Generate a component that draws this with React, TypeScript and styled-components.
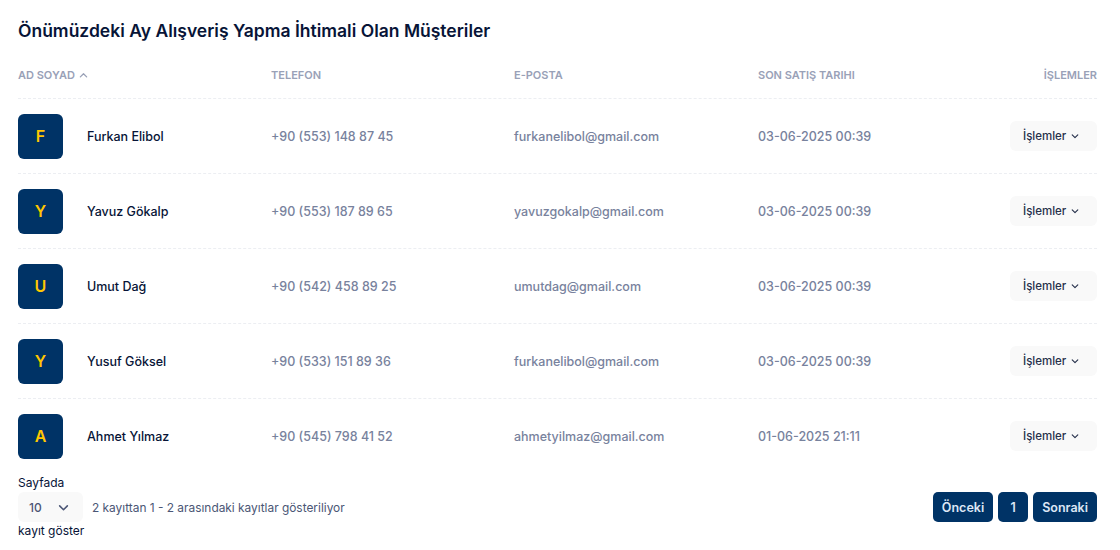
import React from 'react';
import styled, { createGlobalStyle } from 'styled-components';

const GlobalStyle = createGlobalStyle`
  body {
    margin: 0;
    background: #fff;
    font-family: Inter, "Noto Sans", sans-serif;
    color: #071437;
  }
`;

type Customer = {
  name: string;
  phone: string;
  email: string;
  date: string;
};

const customers: Customer[] = [
  { name: 'Furkan Elibol', phone: '+90 (553) 148 87 45', email: 'furkanelibol@gmail.com', date: '03-06-2025 00:39' },
  { name: 'Yavuz Gökalp', phone: '+90 (553) 187 89 65', email: 'yavuzgokalp@gmail.com', date: '03-06-2025 00:39' },
  { name: 'Umut Dağ', phone: '+90 (542) 458 89 25', email: 'umutdag@gmail.com', date: '03-06-2025 00:39' },
  { name: 'Yusuf Göksel', phone: '+90 (533) 151 89 36', email: 'furkanelibol@gmail.com', date: '03-06-2025 00:39' },
  { name: 'Ahmet Yılmaz', phone: '+90 (545) 798 41 52', email: 'ahmetyilmaz@gmail.com', date: '01-06-2025 21:11' },
];

const Chevron = ({ up, size = 8 }: { up?: boolean; size?: number }) => (
  <svg width={size} height={size} viewBox="0 0 10 10" fill="none">
    <path
      d={up ? 'M1.5 6.5 L5 3 L8.5 6.5' : 'M1.5 3.5 L5 7 L8.5 3.5'}
      stroke="currentColor"
      strokeWidth="1.4"
      strokeLinecap="round"
      strokeLinejoin="round"
    />
  </svg>
);

const App = () => {
  return (
    <>
      <GlobalStyle />
      <Card>
        <Title>Önümüzdeki Ay Alışveriş Yapma İhtimali Olan Müşteriler</Title>
        <HeadRow>
          <HeadCell>
            AD SOYAD <Chevron up size={9} />
          </HeadCell>
          <HeadCell>TELEFON</HeadCell>
          <HeadCell>E-POSTA</HeadCell>
          <HeadCell>SON SATIŞ TARIHI</HeadCell>
          <HeadCell $right>İŞLEMLER</HeadCell>
        </HeadRow>
        {customers.map((c, i) => (
          <Row key={i} $last={i === customers.length - 1}>
            <NameCell>
              <Avatar>{c.name.charAt(0)}</Avatar>
              <Name>{c.name}</Name>
            </NameCell>
            <Muted>{c.phone}</Muted>
            <Muted>{c.email}</Muted>
            <Muted>{c.date}</Muted>
            <ActionCell>
              <ActionButton>
                İşlemler <Chevron />
              </ActionButton>
            </ActionCell>
          </Row>
        ))}
        <Footer>
          <PageSize>
            <Label>Sayfada</Label>
            <Select>
              10 <Chevron size={11} />
            </Select>
            <Label>kayıt göster</Label>
          </PageSize>
          <Info>2 kayıttan 1 - 2 arasındaki kayıtlar gösteriliyor</Info>
          <Pager>
            <PageButton>Önceki</PageButton>
            <PageButton $square>1</PageButton>
            <PageButton>Sonraki</PageButton>
          </Pager>
        </Footer>
      </Card>
    </>
  );
};

export default App;

const Card = styled.div`
  padding: 17px 23px 0 18px;
`;

const Title = styled.h1`
  margin: 0 0 23px;
  font-size: 17.5px;
  line-height: 27px;
  font-weight: 600;
  color: #071437;
`;

const columns = '253px 243px 244px 244px 1fr';

const HeadRow = styled.div`
  display: grid;
  grid-template-columns: ${columns};
  padding-bottom: 15px;
  border-bottom: 1px dashed #eceef2;
`;

const HeadCell = styled.div<{ $right?: boolean }>`
  display: flex;
  align-items: center;
  gap: 4px;
  justify-content: ${(p) => (p.$right ? 'flex-end' : 'flex-start')};
  font-size: 11px;
  line-height: 16px;
  font-weight: 600;
  color: #99a1b7;
`;

const Row = styled.div<{ $last?: boolean }>`
  display: grid;
  grid-template-columns: ${columns};
  align-items: center;
  height: 74px;
  border-bottom: ${(p) => (p.$last ? 'none' : '1px dashed #eceef2')};
`;

const NameCell = styled.div`
  display: flex;
  align-items: center;
  gap: 24px;
`;

const Avatar = styled.div`
  width: 45px;
  height: 45px;
  border-radius: 6px;
  background: #003366;
  color: #ffc700;
  display: flex;
  align-items: center;
  justify-content: center;
  font-size: 16px;
  font-weight: 600;
`;

const Name = styled.span`
  font-size: 12.5px;
  font-weight: 500;
  color: #071437;
`;

const Muted = styled.div`
  font-size: 12.5px;
  font-weight: 500;
  color: #78829d;
`;

const ActionCell = styled.div`
  display: flex;
  justify-content: flex-end;
`;

const ActionButton = styled.button`
  display: flex;
  align-items: center;
  gap: 5px;
  height: 30px;
  width: 87px;
  padding: 0 13px;
  border: none;
  border-radius: 6px;
  background: #f9f9f9;
  color: #252f4a;
  font-family: inherit;
  font-size: 11.5px;
  font-weight: 500;
`;

const Footer = styled.div`
  display: flex;
  align-items: center;
  padding-top: 1px;
`;

const PageSize = styled.div`
  display: flex;
  flex-direction: column;
  align-items: flex-start;
  width: 74px;
`;

const Label = styled.span`
  font-size: 12px;
  line-height: 18px;
  color: #071437;
`;

const Select = styled.div`
  display: flex;
  align-items: center;
  justify-content: space-between;
  box-sizing: border-box;
  width: 65px;
  height: 30px;
  padding: 0 14px 0 11px;
  border-radius: 6px;
  background: #f9f9f9;
  font-size: 12px;
  font-weight: 500;
  color: #4b5675;
`;

const Info = styled.span`
  flex: 1;
  font-size: 11.9px;
  color: #4b5675;
`;

const Pager = styled.div`
  display: flex;
  gap: 5px;
`;

const PageButton = styled.button<{ $square?: boolean }>`
  height: 30px;
  min-width: 30px;
  padding: ${(p) => (p.$square ? '0' : '0 9px')};
  border: none;
  border-radius: 5px;
  background: #003366;
  color: #dce6f5;
  font-family: inherit;
  font-size: 12.5px;
  font-weight: 600;
`;
